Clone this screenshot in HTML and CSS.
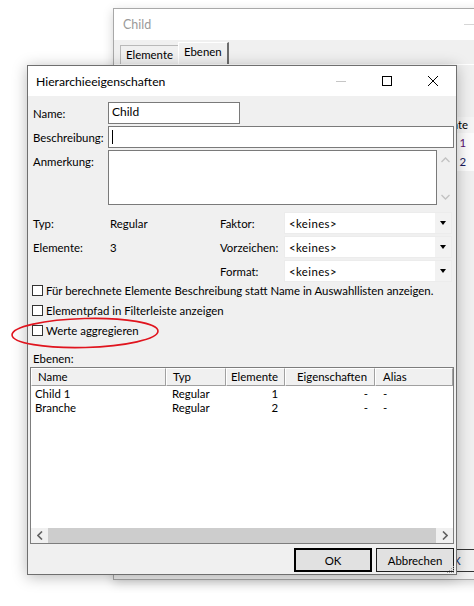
FILE: index.html
```html
<!DOCTYPE html>
<html lang="de">
<head>
<meta charset="utf-8">
<title>Hierarchieeigenschaften</title>
<link rel="stylesheet" href="styles.css">
</head>
<body>
<div class="desk">
  <div class="bgwin">
    <div class="bg-title"><span class="bg-name">Child</span><span class="bg-min"></span></div>
    <div class="bg-tabs">
      <div class="tab">Elemente</div>
      <div class="tab sel">Ebenen</div>
    </div>
    <div class="bg-list">
      <div class="bg-head"><span class="bg-cell">Elemente</span></div>
      <div class="bg-row r1"><span class="bg-cell">1</span></div>
      <div class="bg-row r2"><span class="bg-cell">2</span></div>
    </div>
    <div class="bg-btn">X</div>
  </div>

  <div class="dialog">
    <div class="titlebar">
      <span class="title">Hierarchieeigenschaften</span>
      <div class="caption-btns">
        <span class="cap"><svg width="10" height="10" viewBox="0 0 10 10"><path d="M0 5.5h10" stroke="#c6c6c6" stroke-width="1"/></svg></span>
        <span class="cap"><svg width="10" height="10" viewBox="0 0 10 10"><rect x="0.5" y="0.5" width="9" height="9" fill="none" stroke="#000" stroke-width="1"/></svg></span>
        <span class="cap"><svg width="10" height="10" viewBox="0 0 10 10"><path d="M0 0L10 10M10 0L0 10" stroke="#000" stroke-width="1"/></svg></span>
      </div>
    </div>

    <div class="body">
      <div class="form">
        <label class="lbl">Name:</label>
        <div class="field name-field">Child</div>
        <label class="lbl">Beschreibung:</label>
        <div class="field desc-field"><span class="caret"></span></div>
        <label class="lbl top">Anmerkung:</label>
        <div class="memo-wrap">
          <div class="field memo"></div>
          <div class="vscroll">
            <svg width="9" height="6" viewBox="0 0 9 6"><path d="M0.5 5L4.5 1L8.5 5" fill="none" stroke="#c2c2c2" stroke-width="1.3"/></svg>
            <svg width="9" height="6" viewBox="0 0 9 6"><path d="M0.5 1L4.5 5L8.5 1" fill="none" stroke="#c2c2c2" stroke-width="1.3"/></svg>
          </div>
        </div>
      </div>

      <div class="info">
        <span class="lbl">Typ:</span><span class="val">Regular</span>
        <span class="lbl">Faktor:</span>
        <div class="combo"><span>&lt;keines&gt;</span><span class="drop"><i></i></span></div>
        <span class="lbl">Elemente:</span><span class="val">3</span>
        <span class="lbl">Vorzeichen:</span>
        <div class="combo"><span>&lt;keines&gt;</span><span class="drop"><i></i></span></div>
        <span></span><span></span>
        <span class="lbl">Format:</span>
        <div class="combo"><span>&lt;keines&gt;</span><span class="drop"><i></i></span></div>
      </div>

      <div class="checks">
        <div class="chk"><span class="box"></span>Für berechnete Elemente Beschreibung statt Name in Auswahllisten anzeigen.</div>
        <div class="chk"><span class="box"></span>Elementpfad in Filterleiste anzeigen</div>
        <div class="chk"><span class="box"></span>Werte aggregieren</div>
      </div>

      <div class="ebenen-lbl">Ebenen:</div>
      <div class="list">
        <div class="lhead">
          <span class="c c1">Name</span>
          <span class="c c2">Typ</span>
          <span class="c c3 r">Elemente</span>
          <span class="c c4 r">Eigenschaften</span>
          <span class="c c5">Alias</span>
        </div>
        <div class="lbody">
          <div class="lrow">
            <span class="c c1">Child 1</span>
            <span class="c c2">Regular</span>
            <span class="c c3 r">1</span>
            <span class="c c4 r">-</span>
            <span class="c c5">-</span>
          </div>
          <div class="lrow">
            <span class="c c1">Branche</span>
            <span class="c c2">Regular</span>
            <span class="c c3 r">2</span>
            <span class="c c4 r">-</span>
            <span class="c c5">-</span>
          </div>
        </div>
        <div class="hscroll">
          <span class="arr"><svg width="6" height="9" viewBox="0 0 6 9"><path d="M5 0.5L1 4.5L5 8.5" fill="none" stroke="#606060" stroke-width="1.6"/></svg></span>
          <span class="thumb"></span>
          <span class="arr"><svg width="6" height="9" viewBox="0 0 6 9"><path d="M1 0.5L5 4.5L1 8.5" fill="none" stroke="#606060" stroke-width="1.6"/></svg></span>
        </div>
      </div>

      <div class="buttons">
        <div class="btn default">OK</div>
        <div class="btn">Abbrechen</div>
      </div>
    </div>
    <svg class="grip" width="10" height="10" viewBox="0 0 10 10">
      <g fill="#a0a0a0">
        <rect x="8" y="2" width="1" height="1"/><rect x="6" y="4" width="1" height="1"/><rect x="8" y="4" width="1" height="1"/>
        <rect x="4" y="6" width="1" height="1"/><rect x="6" y="6" width="1" height="1"/><rect x="8" y="6" width="1" height="1"/>
        <rect x="2" y="8" width="1" height="1"/><rect x="4" y="8" width="1" height="1"/><rect x="6" y="8" width="1" height="1"/><rect x="8" y="8" width="1" height="1"/>
      </g>
    </svg>
  </div>

  <svg class="mark" width="160" height="40" viewBox="0 0 160 40">
    <ellipse cx="76" cy="18" rx="73" ry="14.5" fill="none" stroke="#e0141e" stroke-width="1.6" transform="rotate(-1.5 76 18)"/>
  </svg>
</div>
</body>
</html>
```

FILE: styles.css
```css
* { box-sizing: border-box; }
html, body { margin: 0; padding: 0; background: #fff; }
body {
  font-family: "Lato", "Noto Sans", "Liberation Sans", sans-serif;
  font-size: 11.4px;
  line-height: 15px;
  color: #000;
}
.desk {
  position: relative;
  width: 474px;
  height: 606px;
  overflow: hidden;
  background: #fff;
}

/* background window */
.bgwin {
  position: absolute;
  left: 113px;
  top: 8px;
  width: 420px;
  height: 572px;
  background: #f0f0f0;
  border: 1px solid #a8a8a8;
  box-shadow: 0 3px 10px rgba(0,0,0,0.18);
}
.bg-title {
  height: 31px;
  background: #fff;
  display: flex;
  align-items: center;
  padding-left: 9px;
}
.bg-name { color: #9a9a9a; font-size: 12.5px; }
.bg-min {
  margin-left: auto;
  margin-right: 58px;
  width: 10px;
  height: 1px;
  background: #d6d6d6;
}
.bg-tabs {
  height: 25px;
  display: flex;
  align-items: flex-end;
  padding-left: 6px;
  border-bottom: 1px solid #ffffff;
}
.tab {
  height: 19px;
  padding: 0 5px;
  border: 1px solid #b9b9b9;
  border-bottom: none;
  background: #f0f0f0;
  line-height: 18px;
}
.tab.sel {
  height: 22px;
  line-height: 18px;
  border-top: 1px solid #fff;
  border-left: 1px solid #fff;
  border-right: 2px solid #6d6d6d;
  background: #f0f0f0;
  margin-left: -1px;
}
.bg-list {
  margin-top: 52px;
  margin-left: 186px;
  width: 240px;
}
.bg-head {
  height: 16px;
  background: #f5f5f5;
  line-height: 16px;
}
.bg-cell { display: block; width: 168px; text-align: right; }
.bg-row {
  height: 19px;
  line-height: 19px;
  background: #fcfcfc;
}
.bg-row .bg-cell { width: 166px; }
.r1 { color: #5a0f6e; }
.r2 { color: #1b1b5e; }
.bg-btn {
  position: absolute;
  left: 300px;
  top: 540px;
  width: 130px;
  height: 23px;
  border: 1px solid #333;
  border-right: none;
  padding-left: 38px;
  line-height: 22px;
  color: #2a3a6a;
  font-size: 12px;
}

/* dialog */
.dialog {
  position: absolute;
  left: 27px;
  top: 65px;
  width: 430px;
  height: 510px;
  background: #f0f0f0;
  border: 1px solid #6f6f6f;
  box-shadow: 0 2px 14px rgba(0,0,0,0.28);
}
.titlebar {
  height: 30px;
  background: #fff;
  display: flex;
  align-items: center;
  padding-left: 8px;
}
.title { font-size: 12.2px; }
.caption-btns { margin-left: auto; display: flex; }
.cap {
  width: 46px;
  height: 30px;
  display: flex;
  align-items: center;
  justify-content: center;
}
.cap svg { display: block; }

.body { padding: 0 2px; }

.form {
  display: grid;
  grid-template-columns: 75px 1fr;
  row-gap: 2px;
  padding: 6px 0 0 3px;
}
.lbl { display: flex; align-items: center; white-space: nowrap; }
.lbl.top { align-items: flex-start; padding-top: 4px; }
.field {
  height: 22px;
  background: #fff;
  border: 1px solid #7a7a7a;
  padding: 2px 3px;
  line-height: 15px;
  font-size: 12px;
}
.name-field { width: 132px; padding-top: 1px; }
.desc-field { width: 346px; display: flex; align-items: center; }
.caret { width: 1px; height: 14px; background: #000; }
.memo-wrap { display: flex; width: 346px; }
.memo { width: 329px; height: 55px; }
.vscroll {
  width: 17px;
  display: flex;
  flex-direction: column;
  justify-content: space-between;
  align-items: center;
  padding: 7px 0 5px;
}
.vscroll svg { display: block; }

.info {
  display: grid;
  grid-template-columns: 75px 112px 64px 168px;
  grid-auto-rows: 22px;
  row-gap: 2px;
  padding: 7px 0 0 3px;
}
.info .val { display: flex; align-items: center; padding-left: 2px; }
.combo {
  display: flex;
  align-items: center;
  background: #fff;
  border: 1px solid #ececec;
  padding-left: 4px;
  letter-spacing: 0.4px;
}
.combo .drop {
  margin-left: auto;
  width: 16px;
  height: 100%;
  background: #f2f2f2;
  display: flex;
  align-items: center;
  justify-content: center;
}
.combo .drop i {
  width: 0; height: 0;
  border-left: 3.5px solid transparent;
  border-right: 3.5px solid transparent;
  border-top: 4px solid #000;
}

.checks { padding: 0 0 0 2px; margin-top: -2px; }
.chk {
  height: 20px;
  display: flex;
  align-items: center;
  white-space: nowrap;
}
.box {
  width: 11px;
  height: 11px;
  border: 1px solid #333;
  background: #fff;
  margin-right: 3px;
  flex: none;
}

.ebenen-lbl { padding: 11px 0 0 3px; height: 27px; line-height: 15px; }
.list {
  height: 177px;
  border: 1px solid #7d7d7d;
  background: #fff;
  display: flex;
  flex-direction: column;
}
.lhead, .lrow { display: flex; }
.lhead { height: 18px; background: #f0f0f0; }
.lhead .c {
  line-height: 16px;
  border-top: 1px solid #fff;
  border-left: 1px solid #fff;
  border-right: 1px solid #a0a0a0;
  border-bottom: 1px solid #a0a0a0;
}
.lhead .c5 { flex: 1; }
.lbody { flex: 1; padding-top: 1px; }
.lrow { height: 14px; line-height: 14px; }
.c { display: block; white-space: nowrap; overflow: hidden; flex: none; }
.c1 { width: 135px; padding-left: 6px; }
.c2 { width: 60px; padding-left: 6px; }
.c3 { width: 59px; padding-right: 6px; }
.c4 { width: 90px; padding-right: 7px; }
.c5 { width: 78px; padding-left: 7px; }
.lrow .c1 { padding-left: 4px; }
.lrow .c3 { padding-right: 7px; }
.lrow .c5 { padding-left: 8px; }
.r { text-align: right; }

.hscroll {
  height: 15px;
  background: #f0f0f0;
  display: flex;
  align-items: center;
}
.hscroll .arr {
  width: 17px;
  height: 100%;
  display: flex;
  align-items: center;
  justify-content: center;
}
.hscroll .thumb {
  flex: 1;
  height: 15px;
  background: #cdcdcd;
}

.buttons {
  display: flex;
  justify-content: flex-end;
  gap: 4px;
  padding-top: 4px;
}
.btn {
  width: 78px;
  height: 24px;
  background: #e1e1e1;
  border: 1px solid #1e1e1e;
  display: flex;
  align-items: center;
  justify-content: center;
}
.btn.default { border: 2px solid #000; }

.grip {
  position: absolute;
  right: 1px;
  bottom: 0px;
}

.mark {
  position: absolute;
  left: 9px;
  top: 315px;
}
```
